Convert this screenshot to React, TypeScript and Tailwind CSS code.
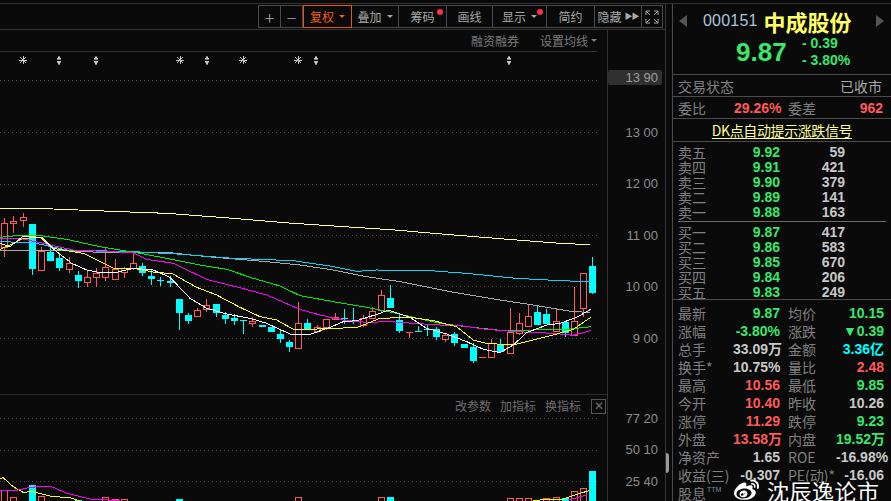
import { FaWeibo } from "react-icons/fa";

const cjk = "font-['Noto_Sans_CJK_SC','Liberation_Sans',sans-serif]";
const num = "font-['Liberation_Sans','Noto_Sans_CJK_SC',sans-serif]";

const RED = "#ff5a5a";
const CYAN = "#00ffff";

// [open top, body bottom, high, low, up?]
const candles: [number, number, number, number, number][] = [
  [223, 247, 218, 257, 1], [221, 223, 216, 233, 1], [217, 220, 213, 227, 1], [224, 269, 224, 275, 0],
  [251, 270, 247, 271, 1], [252, 261, 247, 261, 0], [258, 268, 253, 271, 0], [263, 269, 257, 273, 1],
  [275, 281, 271, 288, 0], [277, 282, 270, 287, 1], [273, 277, 268, 287, 1], [267, 277, 248, 281, 1],
  [269, 279, 259, 279, 1], [268, 272, 267, 278, 1], [263, 268, 252, 270, 1], [266, 273, 263, 276, 0],
  [276, 279, 270, 285, 0], [280, 281, 277, 286, 0], [281, 283, 276, 287, 0], [299, 313, 299, 330, 0],
  [315, 321, 313, 324, 0], [310, 316, 308, 317, 1], [305, 309, 299, 312, 1], [304, 313, 304, 317, 0],
  [315, 319, 312, 324, 0], [318, 321, 314, 325, 0], [320, 321, 320, 334, 0], [321, 323, 317, 327, 1],
  [325, 327, 325, 327, 0], [327, 332, 327, 332, 0], [334, 339, 330, 343, 0], [342, 347, 340, 352, 0],
  [323, 348, 302, 348, 1], [323, 329, 319, 330, 0], [327, 331, 325, 333, 1], [319, 327, 319, 330, 1],
  [317, 319, 313, 320, 1], [318, 319, 309, 324, 0], [321, 322, 308, 324, 0], [318, 325, 315, 327, 1],
  [311, 318, 307, 319, 1], [295, 310, 290, 312, 1], [298, 308, 285, 308, 0], [320, 331, 315, 333, 0],
  [332, 333, 332, 338, 1], [331, 332, 326, 332, 0], [329, 330, 325, 336, 0], [329, 337, 327, 340, 0],
  [335, 339, 334, 342, 1], [334, 343, 332, 346, 0], [344, 348, 344, 348, 0], [347, 361, 343, 363, 0],
  [357, 358, 357, 358, 1], [343, 357, 339, 358, 1], [344, 352, 339, 353, 0], [332, 353, 308, 353, 1],
  [323, 333, 313, 335, 1], [316, 326, 305, 326, 1], [312, 325, 306, 325, 0], [314, 324, 309, 324, 0],
  [321, 331, 309, 332, 1], [322, 333, 322, 337, 0], [321, 335, 287, 335, 1], [273, 308, 273, 317, 1],
  [266, 293, 257, 294, 0],
];

const cx = (i: number) => Math.round(4.3 + 9.187 * i);

// traced in two crops of the reference, so each line has two parts
function line(a: number[][], b: number[][]) {
  return [
    ...a.map(([x, y]) => x / 3 + "," + (200 + y / 3)),
    ...b.map(([x, y]) => 300 + x / 3 + "," + (230 + y / 3)),
  ].join(" ");
}

const maLines = [
  { c: "#ffff99", pts: line([[0, 25], [160, 27], [360, 35], [500, 40], [700, 55], [880, 70]], [[285, 0], [400, 10], [500, 18], [650, 30], [780, 40], [870, 44]]) },
  { c: "#a8a8a8", pts: line([[0, 152], [200, 152], [300, 157], [500, 157], [620, 170], [800, 185]], [[0, 105], [100, 120], [200, 140], [300, 155], [450, 185], [600, 210], [700, 225], [820, 245], [870, 247]]) },
  { c: "#00d8ff", pts: line([[0, 125], [100, 128], [200, 150], [400, 155], [530, 162], [700, 175], [880, 182]], [[0, 95], [90, 108], [170, 124], [230, 120], [390, 122], [500, 130], [650, 145], [780, 152], [870, 155]]) },
  { c: "#00ee00", pts: line([[0, 112], [60, 106], [130, 108], [200, 118], [300, 140], [420, 160], [500, 175], [600, 195], [680, 208], [760, 235], [840, 258]], [[0, 197], [100, 215], [200, 232], [280, 248], [340, 262], [420, 280], [500, 290], [590, 300], [700, 300], [800, 298], [872, 290]]) },
  { c: "#ff00ff", pts: line([[0, 115], [60, 115], [130, 130], [220, 150], [400, 158], [440, 178], [520, 190], [620, 238], [700, 258], [800, 285]], [[0, 238], [60, 255], [130, 270], [200, 277], [270, 275], [340, 280], [420, 285], [490, 288], [560, 298], [650, 305], [760, 310], [820, 316], [872, 302]]) },
  { c: "#ffff00", pts: line([[0, 148], [30, 135], [70, 115], [125, 112], [160, 145], [250, 160], [340, 205], [400, 205], [470, 218], [515, 220], [590, 262], [650, 285], [720, 322], [780, 350], [830, 360]], [[-20, 298], [30, 298], [90, 295], [170, 293], [240, 265], [330, 262], [400, 272], [470, 290], [520, 330], [560, 340], [640, 345], [700, 330], [770, 312], [820, 298], [872, 262]]) },
  { c: "#ffffff", pts: line([[0, 130], [30, 140], [70, 108], [120, 112], [170, 155], [215, 190], [260, 210], [300, 218], [345, 218], [400, 205], [460, 210], [510, 232], [570, 295], [620, 325], [680, 342], [750, 355], [800, 370], [870, 402]], [[0, 313], [30, 313], [90, 292], [130, 275], [170, 272], [240, 250], [265, 240], [330, 262], [380, 295], [440, 312], [500, 335], [550, 358], [600, 368], [640, 345], [680, 308], [740, 285], [780, 280], [830, 262], [872, 238]]) },
];

// volume bar tops for the few candles that reach above the window edge
const volumes: [number, number, number][] = [
  [0, 490, 1], [1, 497, 1], [3, 485, 0], [4, 496, 1], [8, 500, 0], [11, 497, 1], [12, 499, 1], [13, 499, 1],
  [19, 499, 0], [32, 497, 1], [41, 497, 1], [42, 497, 0], [55, 498, 1], [56, 498, 1], [57, 498, 1],
  [59, 498, 1], [60, 497, 1], [61, 498, 0], [62, 491, 1], [63, 488, 1], [64, 471, 0],
];

const stars = [23, 180, 243, 298];
const arrows = [59, 96, 207, 316, 509];

const tools = [
  { w: "w-[22px]", label: "+", big: true },
  { w: "w-[22px]", label: "−", big: true },
  { w: "w-[49px]", label: "复权", caret: true, active: true },
  { w: "w-[47px]", label: "叠加", caret: true },
  { w: "w-[48px]", label: "筹码", dot: true },
  { w: "w-[46px]", label: "画线" },
  { w: "w-[54px]", label: "显示", caret: true, dot: true },
  { w: "w-[48px]", label: "简约" },
  { w: "w-[47px]", label: "隐藏", more: true },
];

const asks = [["卖五", "9.92", "59"], ["卖四", "9.91", "421"], ["卖三", "9.90", "379"], ["卖二", "9.89", "141"], ["卖一", "9.88", "163"]];
const bids = [["买一", "9.87", "417"], ["买二", "9.86", "583"], ["买三", "9.85", "670"], ["买四", "9.84", "206"], ["买五", "9.83", "249"]];

const G = "text-[#38e86c]";
const R = "text-[#ff5a5a]";
const W = "text-[#c8c8c8]";
const stats = [
  ["最新", "9.87", G, "均价", "10.15", G],
  ["涨幅", "-3.80%", G, "涨跌", "▼0.39", G],
  ["总手", "33.09万", W, "金额", "3.36亿", "text-[#00ffff]"],
  ["换手*", "10.75%", W, "量比", "2.48", R],
  ["最高", "10.56", R, "最低", "9.85", G],
  ["今开", "10.40", R, "昨收", "10.26", W],
  ["涨停", "11.29", R, "跌停", "9.23", G],
  ["外盘", "13.58万", R, "内盘", "19.52万", G],
  ["净资产", "1.65", W, "ROE", "-16.98%", W],
  ["收益(三)", "-0.307", W, "PE(动)*", "-16.06", W],
];

function Toolbar() {
  return (
    <div className="flex h-[25px] justify-end pr-[2px] pt-[1px]">
      <div className="flex h-[23px] border border-[#4a4a4a]">
        {tools.map((t) => (
          <div
            key={t.label}
            className={
              "relative flex items-center justify-center gap-[5px] border-r text-[12px] leading-none " + cjk + " " + t.w + " " +
              (t.active ? "border border-[#e8590c] text-[#f0600f] -my-px" : "border-[#4a4a4a] text-[#a8a8a8]")
            }
          >
            <span className={t.big ? "text-[18px] font-light" : ""}>{t.label}</span>
            {t.caret && <span className={"h-0 w-0 border-x-[3px] border-t-[3px] border-x-transparent " + (t.active ? "border-t-[#f0600f]" : "border-t-[#a8a8a8]")} />}
            {t.more && <span className={"-ml-[2px] text-[8px] tracking-[-1px] " + num}>▶▶</span>}
            {t.dot && <span className="absolute right-[3px] top-[3px] h-[6px] w-[6px] rounded-full bg-[#ff3040]" />}
          </div>
        ))}
        <div className="flex w-[20px] items-center justify-center">
          <svg width="14" height="14" viewBox="0 0 14 14" fill="none" stroke="#a8a8a8" strokeWidth="1">
            <path d="M1 5V1H5M1 1L5 5M9 1H13V5M13 1L9 5M1 9V13H5M1 13L5 9M9 13H13V9M13 13L9 9" />
          </svg>
        </div>
      </div>
    </div>
  );
}

function Candles() {
  return (
    <>
      {candles.map(([top, bottom, high, low, up], i) => {
        const x = cx(i);
        const c = up ? RED : CYAN;
        return (
          <g key={i} stroke={c}>
            {high < top && <line x1={x + 0.5} x2={x + 0.5} y1={high} y2={top} />}
            {low > bottom && <line x1={x + 0.5} x2={x + 0.5} y1={bottom} y2={low} />}
            {bottom - top <= 1 ? (
              <line x1={x - 3} x2={x + 4} y1={top + 0.5} y2={top + 0.5} />
            ) : up ? (
              <rect x={x - 2.5} y={top + 0.5} width={6} height={bottom - top} fill="#0a0a0a" />
            ) : (
              <rect x={x - 3} y={top} width={7} height={bottom - top} fill={c} stroke="none" />
            )}
          </g>
        );
      })}
    </>
  );
}

function Chart() {
  return (
    <svg className="block h-[342px] w-[607px]" viewBox="0 52 607 342" shapeRendering="crispEdges" fill="none">
      {stars.map((x) => (
        <g key={x} stroke="#c8c8c8">
          <path d={"M" + (x - 4) + " 60H" + (x + 4) + "M" + x + " 56V64M" + (x - 3) + " 57L" + (x + 3) + " 63M" + (x + 3) + " 57L" + (x - 3) + " 63"} />
        </g>
      ))}
      {arrows.map((x) => (
        <path key={x} d={"M" + x + " 56L" + (x + 2) + " 59H" + (x - 2) + "ZM" + x + " 65L" + (x + 2) + " 61H" + (x - 2) + "Z"} fill="#c8c8c8" stroke="#c8c8c8" strokeWidth="0.6" />
      ))}
      {[80, 132, 184, 235, 286, 338].map((y) => (
        <line key={y} x1="0" x2="600" y1={y + 0.5} y2={y + 0.5} stroke="#4e4e4e" strokeDasharray="1 3" />
      ))}
      <Candles />
      {maLines.map((l) => (
        <polyline key={l.c} points={l.pts} stroke={l.c} strokeWidth="1" />
      ))}
    </svg>
  );
}

function Volume() {
  return (
    <svg className="block h-[84px] w-[607px]" viewBox="0 417 607 84" shapeRendering="crispEdges" fill="none">
      {[418, 450, 481].map((y) => (
        <line key={y} x1="0" x2="600" y1={y + 0.5} y2={y + 0.5} stroke="#4e4e4e" strokeDasharray="1 3" />
      ))}
      {volumes.map(([i, top, up]) =>
        up ? (
          <rect key={i} x={cx(i) - 2.5} y={top + 0.5} width={6} height={20} stroke={RED} />
        ) : (
          <rect key={i} x={cx(i) - 3} y={top} width={7} height={40} fill={CYAN} />
        ),
      )}
      <polyline points="0,478.6 3,477.5 13,486.6 23,492.3 33,491.6 43,494.3 53,496.6 70,497.6 80,501" stroke="#ffff00" />
      <polyline points="0,490.3 17,490.3 30,487.3 50,486 67,493.3 90,499 120,500.6" stroke="#ff00ff" />
      <polyline points="533,500.3 563,499 573,495.6 590,490.3" stroke="#ffff00" />
      <polyline points="568,500 587,495" stroke="#ff00ff" />
    </svg>
  );
}

function AxisLabel({ text, h }: { text: string; h: string }) {
  return (
    <div className={"flex items-center justify-end whitespace-pre pr-[7px] text-[13px] leading-none text-[#8c8c8c] " + num + " " + h}>{text}</div>
  );
}

function BookRows({ rows }: { rows: string[][] }) {
  return (
    <>
      {rows.map(([label, price, vol]) => (
        <div key={label} className="flex h-[15px] items-center leading-none">
          <span className={"w-[75px] pl-[5px] text-[14px] text-[#808080] " + cjk}>{label}</span>
          <span className={"w-[32px] text-right text-[14px] font-bold text-[#38e86c] " + num}>{price}</span>
          <span className={"w-[65px] text-right text-[14px] font-bold text-[#c8c8c8] " + num}>{vol}</span>
        </div>
      ))}
    </>
  );
}

function Quote() {
  return (
    <div className="relative h-full w-[219px] border-l border-[#4a4a4a]">
      <div className="flex h-[36px] items-center pb-[2px] pl-[6px]">
        <span className="h-0 w-0 border-y-[6px] border-r-[8px] border-y-transparent border-r-[#555]" />
        <span className={"ml-[16px] text-[16px] tracking-[0.2px] text-[#a9c4dc] " + num}>000151</span>
        <span className={"ml-[6px] text-[22px] font-bold leading-none text-[#ffff66] " + cjk}>中成股份</span>
        <span className="ml-[24px] h-0 w-0 border-y-[6px] border-l-[8px] border-y-transparent border-l-[#555]" />
      </div>
      <div className="flex h-[35px] items-center border-b border-[#4a4a4a] pb-[11px]">
        <span className={"ml-[63px] w-[50px] text-[26px] font-bold leading-none text-[#38e86c] " + num}>9.87</span>
        <div className={"ml-[16px] text-[14px] font-bold leading-[17px] text-[#38e86c] " + num}>
          <div>- 0.39</div>
          <div>- 3.80%</div>
        </div>
      </div>
      <div className={"flex h-[22px] items-center justify-between border-b border-[#4a4a4a] px-[5px] text-[14px] leading-none " + cjk}>
        <span className="text-[#808080]">交易状态</span>
        <span className="pr-[4px] text-[#a8a8a8]">已收市</span>
      </div>
      <div className={"flex h-[22px] items-center border-b border-[#4a4a4a] pl-[5px] text-[14px] leading-none " + cjk}>
        <span className="w-[56px] text-[#808080]">委比</span>
        <span className={"w-[47px] font-bold text-[#ff5a5a] " + num}>29.26%</span>
        <span className="ml-[7px] w-[28px] text-[#808080]">委差</span>
        <span className={"w-[67px] text-right font-bold text-[#ff5a5a] " + num}>962</span>
      </div>
      <div className={"flex h-[23px] items-center justify-center border-b border-[#4a4a4a] text-[14px] leading-none tracking-[-0.4px] text-[#ffff99] underline underline-offset-2 " + cjk}>
        DK点自动提示涨跌信号
      </div>
      <div className="pt-[2px]">
        <BookRows rows={asks} />
      </div>
      <div className="mx-[5px] mb-[2px] mt-[2px] border-b border-[#6a6a6a]" />
      <BookRows rows={bids} />
      <div className="border-t border-[#4a4a4a] pt-[4px]">
        {stats.map(([a, av, ac, b, bv, bc]) => (
          <div key={a} className="flex h-[18px] items-center leading-none">
            <span className={"w-[60px] whitespace-nowrap pl-[5px] text-[14px] text-[#808080] " + cjk}>{a}</span>
            <span className={"w-[47px] whitespace-nowrap text-right text-[14px] font-bold " + num + " " + ac}>{av}</span>
            <span className={"ml-[8px] w-[48px] whitespace-nowrap text-[14px] text-[#808080] " + cjk}>{b}</span>
            <span className={"w-[48px] whitespace-nowrap text-right text-[14px] font-bold " + num + " " + bc}>{bv}</span>
          </div>
        ))}
        <div className={"flex h-[18px] items-center pl-[5px] text-[14px] leading-none text-[#808080] " + cjk}>
          股息<sup className={"ml-[1px] text-[7px] text-[#6f8aa0] " + num}>TTM</sup>
        </div>
      </div>
      {/* watermark sits on top of the last rows */}
      <div className="absolute bottom-[-2px] left-[60px] flex items-center gap-[7px] text-white">
        <FaWeibo className="h-[25px] w-[27px]" />
        <span className={"whitespace-nowrap text-[22px] leading-[26px] tracking-[0.5px] [text-shadow:0_0_2px_#000] " + cjk}>沈辰逸论市</span>
      </div>
    </div>
  );
}

export default function App() {
  return (
    <div className="h-[501px] w-[891px] overflow-hidden bg-[#0a0a0a]">
      <div className="h-[4px] border-b border-[#333]" />
      <div className="flex h-[497px]">
        <div className="h-full w-[666px] border-r border-[#333]">
          <Toolbar />
          <div className="flex border-t border-[#333]">
            <div className="w-[607px]">
              <div className={"mr-[10px] flex h-[22px] items-center justify-end gap-[21px] border-b border-[#333] text-[12px] leading-none text-[#7c7c7c] " + cjk}>
                <span>融资融券</span>
                <span className="flex items-center gap-[3px]">
                  设置均线
                  <span className="h-0 w-0 border-x-[3px] border-t-[3px] border-x-transparent border-t-[#7c7c7c]" />
                </span>
              </div>
              <Chart />
              <div className={"flex h-[23px] items-center justify-end gap-[9px] border-t border-[#2c2c2c] pr-[1px] text-[12px] leading-none text-[#6e6e6e] " + cjk}>
                <span>改参数</span>
                <span>加指标</span>
                <span className="mr-[1px]">换指标</span>
                <span className={"flex h-[15px] w-[15px] items-center justify-center border border-[#555] text-[12px] " + num}>✕</span>
              </div>
              <Volume />
            </div>
            <div className="w-[58px] border-l border-[#333]">
              <div className="h-[40px]" />
              <div className="mr-[3px] flex h-[15px] items-center justify-end whitespace-pre rounded-[2px] bg-[#303030] pr-[4px] text-[13px] leading-none text-[#9c9c9c]">
                <span className={num}>13 90</span>
              </div>
              <AxisLabel text="13 00" h="h-[51.5px] mt-[21.5px]" />
              <AxisLabel text="12 00" h="h-[51.5px]" />
              <AxisLabel text="11 00" h="h-[51.5px]" />
              <AxisLabel text="10 00" h="h-[51.5px]" />
              <AxisLabel text="9 00" h="h-[51.5px]" />
              <div className="h-[38.5px]" />
              <AxisLabel text="77 20" h="h-[31.5px]" />
              <AxisLabel text="50 10" h="h-[31.5px]" />
              <AxisLabel text="25 40" h="h-[31.5px]" />
              <AxisLabel text="9 00" h="h-[20px]" />
            </div>
          </div>
        </div>
        <div className="relative w-[6px]">
          <div className="absolute left-0 top-[449px] h-[20px] w-[3px] rounded-r-sm bg-[#9a9a9a]" />
        </div>
        <Quote />
      </div>
    </div>
  );
}
